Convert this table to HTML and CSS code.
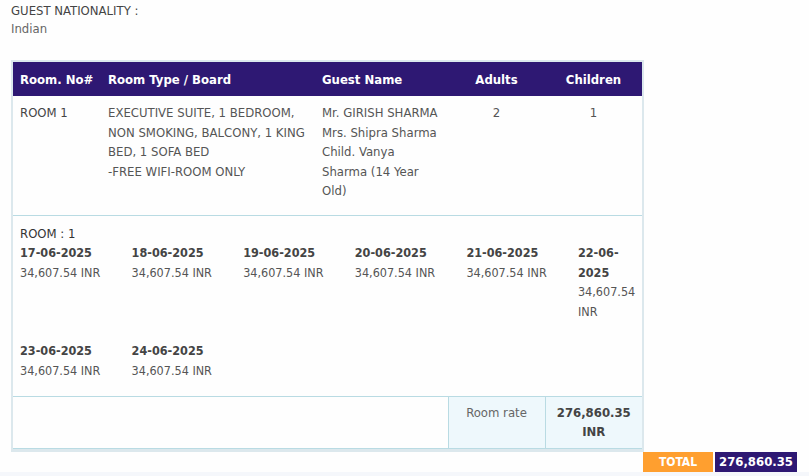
FILE: index.html
```html
<!DOCTYPE html>
<html>
<head>
<meta charset="utf-8">
<link rel="stylesheet" href="styles.css">
</head>
<body>
<div class="page">
  <div class="nat">
    <div class="nat-label">GUEST NATIONALITY :</div>
    <div class="nat-value">Indian</div>
  </div>
  <div class="box">
    <table class="tbl">
      <colgroup>
        <col class="c1"><col class="c2"><col class="c3"><col class="c4"><col class="c5">
      </colgroup>
      <thead>
        <tr>
          <th>Room. No#</th>
          <th>Room Type / Board</th>
          <th>Guest Name</th>
          <th class="ctr">Adults</th>
          <th class="ctr">Children</th>
        </tr>
      </thead>
      <tbody>
        <tr class="room-row">
          <td class="rno">ROOM 1</td>
          <td class="rtype">EXECUTIVE SUITE, 1 BEDROOM, NON SMOKING, BALCONY, 1 KING BED, 1 SOFA BED<br>-FREE WIFI-ROOM ONLY</td>
          <td class="guests">Mr. GIRISH SHARMA<br>Mrs. Shipra Sharma<br>Child. Vanya Sharma (14 Year Old)</td>
          <td class="ctr">2</td>
          <td class="ctr">1</td>
        </tr>
        <tr class="dates-row">
          <td colspan="5">
            <div class="room-title">ROOM : 1</div>
            <div class="dates">
              <div class="day"><div class="d">17-06-2025</div><div class="p">34,607.54 INR</div></div>
              <div class="day"><div class="d">18-06-2025</div><div class="p">34,607.54 INR</div></div>
              <div class="day"><div class="d">19-06-2025</div><div class="p">34,607.54 INR</div></div>
              <div class="day"><div class="d">20-06-2025</div><div class="p">34,607.54 INR</div></div>
              <div class="day"><div class="d">21-06-2025</div><div class="p">34,607.54 INR</div></div>
              <div class="day last"><div class="d">22-06-2025</div><div class="p">34,607.54 INR</div></div>
              <div class="day"><div class="d">23-06-2025</div><div class="p">34,607.54 INR</div></div>
              <div class="day"><div class="d">24-06-2025</div><div class="p">34,607.54 INR</div></div>
            </div>
          </td>
        </tr>
        <tr class="rate-row">
          <td colspan="3"></td>
          <td class="rate-label">Room rate</td>
          <td class="rate-value">276,860.35 INR</td>
        </tr>
      </tbody>
    </table>
  </div>
  <div class="total">
    <span class="total-label">TOTAL</span>
    <span class="total-value">276,860.35</span>
  </div>
</div>
<div class="strip"></div>
</body>
</html>
```

FILE: styles.css
```css
html, body {
  margin: 0;
  padding: 0;
  background: #fefefe;
}
body {
  font-family: "DejaVu Sans Condensed", "DejaVu Sans", sans-serif;
  font-size: 13px;
  color: #555;
}
.page {
  padding: 2px 12px 0 11px;
}
.nat {
  line-height: 18px;
}
.nat-label {
  color: #444;
}
.nat-value {
  color: #666;
}
.box {
  margin-top: 22px;
  width: 629px;
  border: 2px solid #dce8ed;
  border-bottom-width: 3px;
}
.tbl {
  width: 629px;
  border-collapse: collapse;
  table-layout: fixed;
}
.c1 { width: 88px; }
.c2 { width: 214px; }
.c3 { width: 133px; }
.c4 { width: 97px; }
.c5 { width: 97px; }
.tbl th {
  background: #2e1873;
  color: #fff;
  font-weight: bold;
  font-size: 13px;
  height: 34px;
  padding: 0 7px;
  text-align: left;
}
.tbl th.ctr, .tbl td.ctr {
  text-align: center;
}
.tbl td {
  padding: 0 7px;
  vertical-align: top;
  line-height: 19.6px;
}
.room-row td {
  padding-top: 7px;
  padding-bottom: 14px;
  color: #555;
}
.room-row td.rno {
  color: #444;
}
.guests {
  color: #666;
}
.dates-row td {
  border-top: 1px solid #b9dbe3;
  padding-top: 9px;
  padding-bottom: 15px;
}
.room-title {
  font-size: 13px;
  color: #333;
  line-height: 18px;
}
.dates {
  display: flex;
  flex-wrap: wrap;
  row-gap: 20px;
}
.day {
  width: 111.6px;
}
.day.last {
  width: auto;
  flex: 1 1 0;
  min-width: 0;
}
.day .d {
  font-weight: bold;
  font-size: 12.5px;
  color: #444;
}
.day .p {
  color: #555;
  font-size: 12.5px;
}
.rate-row td {
  border-top: 1px solid #b9dbe3;
  border-bottom: 1px solid #b9dbe3;
  height: 38px;
  padding-top: 6px;
  padding-bottom: 6px;
}
.rate-label {
  background: #eef8fc;
  border-left: 1px solid #b9dbe3;
  text-align: center;
  color: #666;
}
.rate-value {
  background: #eef8fc;
  border-left: 1px solid #b9dbe3;
  text-align: center;
  font-weight: bold;
  font-size: 13px;
  color: #444;
}
.total {
  display: flex;
  justify-content: flex-end;
  gap: 2px;
}
.total-label, .total-value {
  height: 20px;
  line-height: 20px;
  color: #fff;
  font-weight: bold;
  font-size: 13px;
  text-align: center;
}
.total-label {
  width: 70px;
  background: #ff9f2f;
  font-size: 12px;
}
.total-value {
  width: 82px;
  background: #2e1873;
}
.strip {
  height: 10px;
  background: #f5f7fb;
}
```
